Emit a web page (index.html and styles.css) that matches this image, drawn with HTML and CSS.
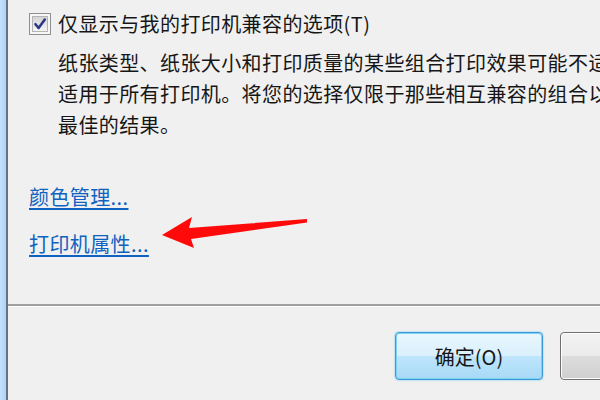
FILE: index.html
```
<!DOCTYPE html>
<html lang="zh-CN">
<head>
  <meta charset="UTF-8">
  <meta name="viewport" content="width=device-width, initial-scale=1.0">
  <title>打印首选项</title>
  <link rel="stylesheet" href="styles.css">
</head>
<body>
  <div class="window">
    <div class="frame-edge"></div>
    <div class="dialog">
      <label class="check-row">
        <span class="checkbox">
          <svg width="14" height="14" viewBox="0 0 14 14">
            <path d="M2.5 7.2 L5.6 11 L11.8 2.6" fill="none" stroke="#2a3888" stroke-width="2.6" stroke-linecap="round" stroke-linejoin="round"/>
          </svg>
        </span>
        <span class="check-label">仅显示与我的打印机兼容的选项(T)</span>
      </label>

      <div class="note">
        <div class="note-line">纸张类型、纸张大小和打印质量的某些组合打印效果可能不适</div>
        <div class="note-line">适用于所有打印机。将您的选择仅限于那些相互兼容的组合以</div>
        <div class="note-line">最佳的结果。</div>
      </div>

      <div class="links">
        <a class="link" href="#">颜色管理...</a>
        <a class="link" href="#">打印机属性...</a>
      </div>

      <div class="footer">
        <button class="btn btn-default">确定(O)</button>
        <button class="btn">取消(C)</button>
      </div>
    </div>

    <svg class="arrow" width="160" height="42" viewBox="155 212 160 42">
      <polygon points="162,235 192,217 189,228 307,219 307,222.5 191,239 194,248" fill="#ff0a0a"/>
    </svg>
  </div>
</body>
</html>
```

FILE: styles.css
```
body {
  margin: 0;
  font-family: "Noto Sans CJK SC", "Noto Sans", sans-serif;
  color: #161616;
  background: #f0f0f0;
  overflow: hidden;
}

.window {
  position: relative;
  display: flex;
  width: 600px;
  height: 400px;
  overflow: hidden;
}

.frame-edge {
  width: 6px;
  flex-shrink: 0;
  background: linear-gradient(to right, #c4e0fb, #aed2f6);
}

.dialog {
  flex: 1;
  display: flex;
  flex-direction: column;
  min-width: 0;
  border-left: 2px solid #66737f;
  background: #f0f0f0;
  overflow: hidden;
  font-size: 20px;
  letter-spacing: 0.4px;
}

.check-row {
  display: flex;
  align-items: center;
  height: 31px;
  margin-top: 8px;
  padding-left: 21px;
  white-space: nowrap;
}

.checkbox {
  box-sizing: border-box;
  width: 22px;
  height: 22px;
  margin-right: 7px;
  flex-shrink: 0;
  display: flex;
  align-items: center;
  justify-content: center;
  border: 1px solid #8e8f8f;
  background: #f4f4f4;
  box-shadow: inset 0 0 0 2px #f6f6f6, inset 0 0 0 3px #b4b4b4;
}

.checkbox svg {
  background: linear-gradient(#d4d4d4, #f6f6f6);
}

.note {
  margin-top: 8px;
  padding-left: 50px;
  line-height: 31px;
  white-space: nowrap;
}

.links {
  display: flex;
  flex-direction: column;
  align-items: flex-start;
  gap: 16px;
  margin-top: 41px;
  padding-left: 21px;
  line-height: 31px;
}

.link {
  color: #0f62c0;
  text-decoration: underline;
  text-underline-offset: 3px;
}

.footer {
  display: flex;
  gap: 17px;
  margin-top: auto;
  height: 96px;
  box-sizing: border-box;
  padding: 26px 0 0 387px;
  border-top: 2px solid #a0a0a0;
  box-shadow: inset 0 1px 0 #ffffff;
}

.btn {
  box-sizing: border-box;
  width: 148px;
  height: 48px;
  flex-shrink: 0;
  font-family: inherit;
  font-size: 20px;
  color: #161616;
  border: 1px solid #707070;
  border-radius: 4px;
  background: linear-gradient(#f2f2f2 0%, #ebebeb 50%, #dddddd 51%, #cfcfcf 100%);
  box-shadow: inset 0 0 0 1px #fcfcfc;
}

.btn-default {
  border: 1px solid #3c9bd6;
  background: linear-gradient(#eaf6fd 0%, #d9f0fc 50%, #bee6fd 51%, #a7d9f5 100%);
  box-shadow: 0 0 2px #5ec0f0, inset 0 0 0 1px #7fd0f6;
}

.arrow {
  position: absolute;
  left: 155px;
  top: 212px;
}
```
